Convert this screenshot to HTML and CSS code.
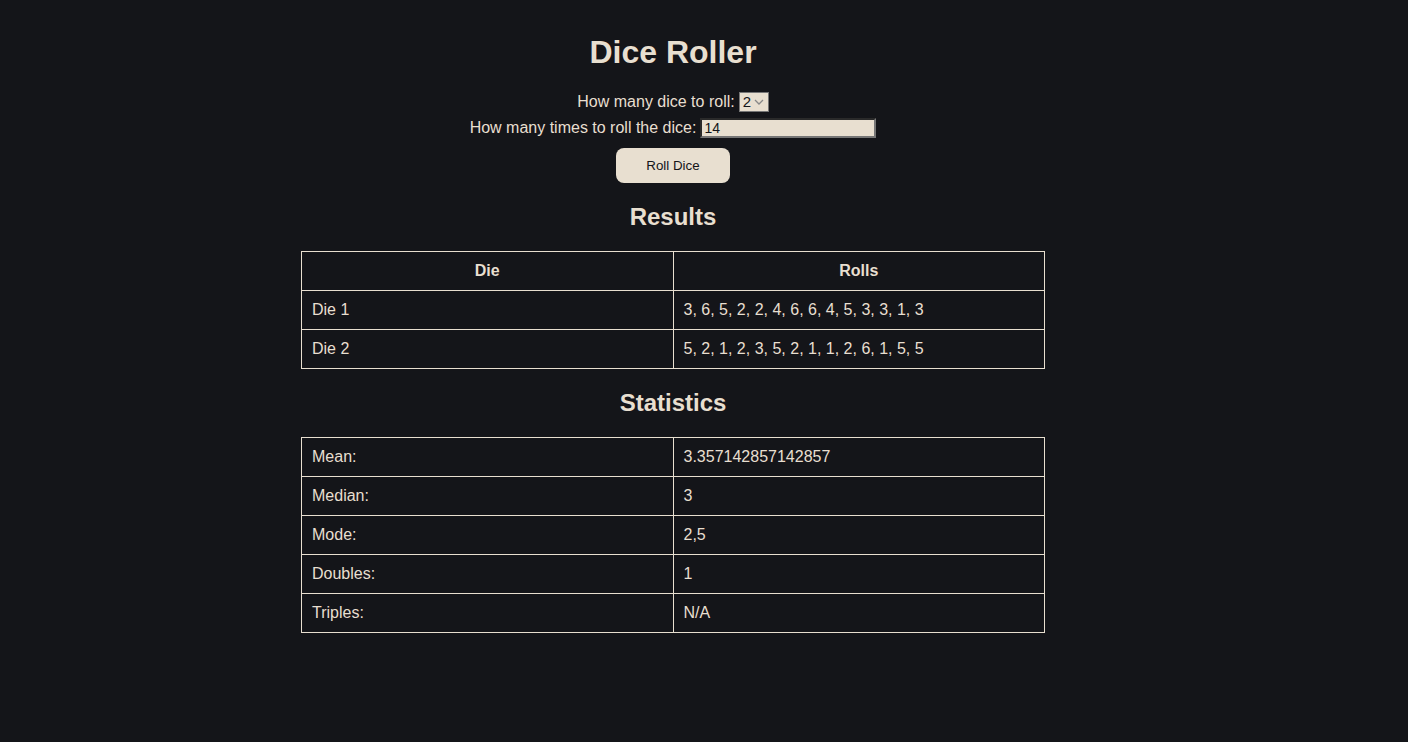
FILE: index.html
```html
<!DOCTYPE html>
<html>
<head>
<meta charset="utf-8">
<title>Dice Roller</title>
<link rel="stylesheet" href="styles.css">
</head>
<body>
<h1 class="title">Dice Roller</h1>
<form class="form">
  <div class="row">
    <label for="count">How many dice to roll:</label>
    <select id="count" class="select"><option>1</option><option selected>2</option><option>3</option></select>
  </div>
  <div class="row">
    <label for="times">How many times to roll the dice:</label>
    <input id="times" class="input" type="text" value="14">
  </div>
  <button type="button" class="btn">Roll Dice</button>
</form>
<h2 class="section">Results</h2>
<table class="table">
  <tr><th>Die</th><th>Rolls</th></tr>
  <tr><td>Die 1</td><td>3, 6, 5, 2, 2, 4, 6, 6, 4, 5, 3, 3, 1, 3</td></tr>
  <tr><td>Die 2</td><td>5, 2, 1, 2, 3, 5, 2, 1, 1, 2, 6, 1, 5, 5</td></tr>
</table>
<h2 class="section">Statistics</h2>
<table class="table">
  <tr><td>Mean:</td><td>3.357142857142857</td></tr>
  <tr><td>Median:</td><td>3</td></tr>
  <tr><td>Mode:</td><td>2,5</td></tr>
  <tr><td>Doubles:</td><td>1</td></tr>
  <tr><td>Triples:</td><td>N/A</td></tr>
</table>
</body>
</html>
```
FILE: styles.css
```css
html, body {
  background: #141519;
}
body {
  margin: 8px 70px 8px 8px;
  color: #e8dfd0;
  font-family: "Liberation Sans", Arial, sans-serif;
  font-size: 16px;
  text-align: center;
}
.title {
  font-size: 32px;
  margin: 26px 0 18px;
}
.form {
  display: flex;
  flex-direction: column;
  align-items: center;
}
.row {
  display: flex;
  align-items: center;
  gap: 4px;
  height: 26px;
}
.select {
  -webkit-appearance: none;
  appearance: none;
  background-color: #e8dfd0;
  background-image: url("data:image/svg+xml;utf8,<svg xmlns='http://www.w3.org/2000/svg' width='10' height='6' viewBox='0 0 10 6'><path d='M1 1l4 4 4-4' fill='none' stroke='%23888' stroke-width='1.3'/></svg>");
  background-repeat: no-repeat;
  background-position: right 4px center;
  color: #141519;
  border: 1px solid #767676;
  border-radius: 0;
  font-family: "Liberation Sans", Arial, sans-serif;
  font-size: 15px;
  line-height: 18px;
  width: 30px;
  height: 20px;
  padding: 0 0 0 3px;
  box-sizing: border-box;
}
.input {
  background: #e8dfd0;
  color: #141519;
  border: 2px solid #767676;
  border-top-color: #2a2a2a;
  border-left-color: #2a2a2a;
  font-family: "Liberation Sans", Arial, sans-serif;
  font-size: 14px;
  padding: 1px 2px;
  box-sizing: border-box;
  width: 176px;
  height: 20px;
}
.btn {
  margin-top: 7px;
  background: #e8dfd0;
  color: #141519;
  border: none;
  border-radius: 8px;
  width: 114px;
  height: 35px;
  font-family: "Liberation Sans", Arial, sans-serif;
  font-size: 13.33px;
}
.section {
  font-size: 24px;
  margin: 20px 0;
}
.table {
  width: 744px;
  margin: 0 auto;
  border-collapse: collapse;
  table-layout: fixed;
}
.table th, .table td {
  border: 1px solid #e8dfd0;
  padding: 10px;
  text-align: left;
  line-height: 18px;
}
.table th {
  text-align: center;
}
```
